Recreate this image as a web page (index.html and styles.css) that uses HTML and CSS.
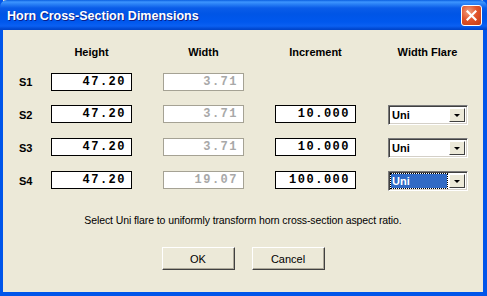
FILE: index.html
```html
<!DOCTYPE html>
<html lang="en">
<head>
  <meta charset="UTF-8">
  <title>Horn Cross-Section Dimensions</title>
  <link rel="stylesheet" href="styles.css">
</head>
<body>
  <div class="window">
    <!-- Title Bar -->
    <div class="titlebar">
      <span class="title">Horn Cross-Section Dimensions</span>
      <button class="close" aria-label="Close">
        <svg width="11" height="11" viewBox="0 0 11 11">
          <path d="M1.5 1.5 L9.5 9.5 M9.5 1.5 L1.5 9.5" stroke="#fff" stroke-width="2.2" stroke-linecap="square"/>
        </svg>
      </button>
    </div>

    <!-- Dialog Body -->
    <div class="content">
      <div class="row head">
        <span class="label"></span>
        <div class="cells">
          <span class="cell">Height</span>
          <span class="cell">Width</span>
          <span class="cell">Increment</span>
          <span class="cell">Width Flare</span>
        </div>
      </div>

      <div class="row">
        <span class="label">S1</span>
        <div class="cells">
          <span class="cell field">47.20</span>
          <span class="cell field disabled">3.71</span>
        </div>
      </div>

      <div class="row">
        <span class="label">S2</span>
        <div class="cells">
          <span class="cell field">47.20</span>
          <span class="cell field disabled">3.71</span>
          <span class="cell field">10.000</span>
          <span class="cell combo"><span class="value">Uni</span><span class="arrow"></span></span>
        </div>
      </div>

      <div class="row">
        <span class="label">S3</span>
        <div class="cells">
          <span class="cell field">47.20</span>
          <span class="cell field disabled">3.71</span>
          <span class="cell field">10.000</span>
          <span class="cell combo"><span class="value">Uni</span><span class="arrow"></span></span>
        </div>
      </div>

      <div class="row">
        <span class="label">S4</span>
        <div class="cells">
          <span class="cell field">47.20</span>
          <span class="cell field disabled">19.07</span>
          <span class="cell field">100.000</span>
          <span class="cell combo focused"><span class="value">Uni</span><span class="arrow"></span></span>
        </div>
      </div>

      <p class="hint">Select Uni flare to uniformly transform horn cross-section aspect ratio.</p>

      <div class="buttons">
        <button class="btn">OK</button>
        <button class="btn">Cancel</button>
      </div>
    </div>
  </div>
</body>
</html>
```

FILE: styles.css
```css
/* General Styles */
body {
  margin: 0;
  padding: 0;
  background: #ece9d8;
  font-family: 'Liberation Sans', Arial, sans-serif;
}

/* Window Frame */
.window {
  width: 487px;
  height: 296px;
  box-sizing: border-box;
  background: #ece9d8;
  border: 3px solid #0055ea;
  border-top: none;
  border-right-width: 4px;
  border-bottom-width: 4px;
  display: flex;
  flex-direction: column;
}

/* Title Bar */
.titlebar {
  height: 30px;
  margin: 0 -4px 0 -3px;
  padding: 0 5px 0 7px;
  display: flex;
  align-items: center;
  justify-content: space-between;
  border-radius: 7px 7px 0 0;
  background: linear-gradient(to bottom, #0a5fe0 0, #3d95ff 2px, #2b82f6 4px, #0a5ce8 8px, #0055e6 14px, #0058ee 22px, #0a60f2 26px, #0047d0 29px, #0044c8 30px);
}

.title {
  color: #fff;
  font-size: 12.5px;
  font-weight: bold;
  text-shadow: 1px 1px #0a1e8a;
  padding-top: 1px;
}

.close {
  width: 21px;
  height: 21px;
  padding: 0;
  margin-top: 1px;
  border: 1px solid #fff;
  border-radius: 3px;
  background: radial-gradient(circle at 35% 30%, #f0a080 0, #e2552c 45%, #c43a12 100%);
  display: flex;
  align-items: center;
  justify-content: center;
}

/* Content */
.content {
  flex: 1;
  padding: 14px 0 0 16px;
}

.row {
  display: flex;
  align-items: center;
  height: 18px;
  margin-bottom: 15px;
}

.row.head {
  height: 16px;
  margin-bottom: 13px;
}

.label {
  width: 32px;
  font-size: 11px;
  font-weight: bold;
  color: #000;
}

.cells {
  display: flex;
  gap: 31px;
}

.cell {
  width: 81px;
  box-sizing: border-box;
  font-size: 11px;
  font-weight: bold;
  text-align: center;
  color: #000;
}

/* Text Fields */
.field {
  height: 18px;
  line-height: 16px;
  border: 1px solid #000;
  background: #fff;
  text-align: right;
  padding-right: 5px;
  font-family: 'Liberation Mono', 'Courier New', monospace;
  font-size: 12px;
  letter-spacing: 1.5px;
}

.field.disabled {
  border-color: #a5a294;
  color: #a8a8a8;
}

/* Dropdown */
.combo {
  width: 80px;
  height: 20px;
  margin-left: 1px;
  display: flex;
  align-items: center;
  border: 1px solid;
  border-color: #7a7a7a #fff #fff #7a7a7a;
  box-shadow: inset 1px 1px #404040, inset -1px -1px #d4d0c8;
  background: #fff;
  text-align: left;
  padding: 2px;
}

.combo .value {
  flex: 1;
  height: 14px;
  line-height: 14px;
  padding-left: 1px;
  margin-right: 2px;
}

.combo.focused .value {
  background: #316ac5;
  color: #fff;
  outline: 1px dotted #000;
}

.arrow {
  width: 16px;
  height: 14px;
  box-sizing: border-box;
  background: #ece9d8;
  border: 1px solid;
  border-color: #fff #404040 #404040 #fff;
  position: relative;
}

.arrow::after {
  content: '';
  position: absolute;
  left: 4px;
  top: 5px;
  border-left: 3px solid transparent;
  border-right: 3px solid transparent;
  border-top: 3px solid #000;
}

/* Hint */
.hint {
  margin: 24px 0 0 -16px;
  text-align: center;
  font-size: 10.5px;
  letter-spacing: -0.1px;
  color: #000;
}

/* Buttons */
.buttons {
  display: flex;
  justify-content: center;
  gap: 17px;
  margin: 21px 0 0 -16px;
}

.btn {
  width: 73px;
  height: 23px;
  padding: 0;
  font-family: 'Liberation Sans', Arial, sans-serif;
  font-size: 11px;
  color: #000;
  background: #ece9d8;
  border: 1px solid;
  border-color: #fff #404040 #404040 #fff;
  box-shadow: inset -1px -1px #aca899;
}
```
